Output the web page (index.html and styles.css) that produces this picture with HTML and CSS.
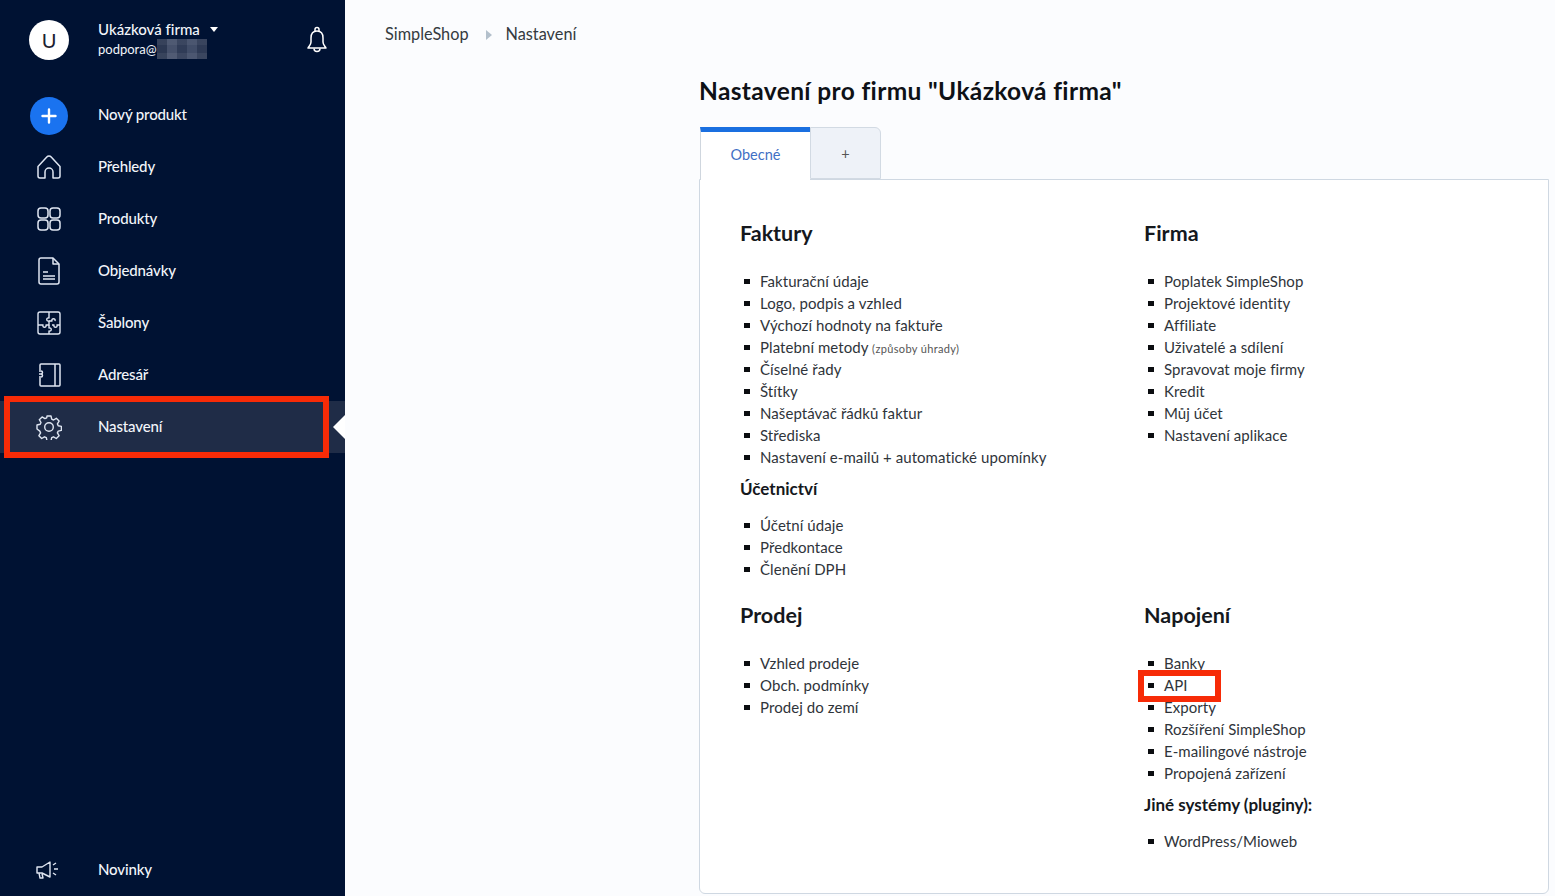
FILE: index.html
```html
<!DOCTYPE html>
<html lang="cs">
<head>
<meta charset="utf-8">
<title>Nastavení</title>
<link rel="stylesheet" href="styles.css">
</head>
<body>
<div class="app">
  <aside class="sidebar">
    <div class="account">
      <div class="avatar">U</div>
      <div class="account-info">
        <div class="account-name">Ukázková firma <span class="caret"></span></div>
        <div class="account-mail">podpora@<span class="blur"></span></div>
      </div>
      <svg class="bell" viewBox="0 0 24 28" width="24" height="28" fill="none" stroke="#fff" stroke-width="1.5" stroke-linejoin="round"><path d="M10 5V3.500a2 2 0 0 1 4 0V5"/><path d="M12 5c-4 0-6 3-6 7v4c0 3-2 4-3 6h18c-1-2-3-3-3-6v-4c0-4-2-7-6-7z"/><path d="M9 22.500c0 2 1.300 3 3 3s3-1 3-3"/></svg>
    </div>
    <nav class="nav">
      <a class="nav-item">
        <span class="nav-icon"><span class="plus-circle"><svg viewBox="0 0 16 16" width="16" height="16" fill="none" stroke="#fff" stroke-width="2.400" stroke-linecap="round"><path d="M8 1.500v13M1.500 8h13"/></svg></span></span>
        Nový produkt
      </a>
      <a class="nav-item">
        <span class="nav-icon"><svg viewBox="0 0 26 26" width="26" height="26" fill="none" stroke="#dfe6f2" stroke-width="1.500" stroke-linejoin="round"><path d="M2 12.500 10.800 3a3 3 0 0 1 4.400 0L24 12.500V22a2 2 0 0 1-2 2h-5v-6a4 4 0 0 0-8 0v6H4a2 2 0 0 1-2-2z"/></svg></span>
        Přehledy
      </a>
      <a class="nav-item">
        <span class="nav-icon"><svg viewBox="0 0 26 26" width="26" height="26" fill="none" stroke="#dfe6f2" stroke-width="1.500"><rect x="2" y="2" width="10" height="10" rx="3"/><rect x="14" y="2" width="10" height="10" rx="3"/><rect x="2" y="14" width="10" height="10" rx="3"/><rect x="14" y="14" width="10" height="10" rx="3"/></svg></span>
        Produkty
      </a>
      <a class="nav-item">
        <span class="nav-icon"><svg viewBox="0 0 26 30" width="26" height="30" fill="none" stroke="#dfe6f2" stroke-width="1.500" stroke-linejoin="round"><path d="M5 2h12l6 6v18a2 2 0 0 1-2 2H5a2 2 0 0 1-2-2V4a2 2 0 0 1 2-2z"/><path d="M17 2v6h6"/><path d="M7 16h5M7 20h12M7 23h12"/></svg></span>
        Objednávky
      </a>
      <a class="nav-item">
        <span class="nav-icon"><svg viewBox="0 0 26 26" width="26" height="26" fill="none" stroke="#dfe6f2" stroke-width="1.400" stroke-linejoin="round"><rect x="2" y="2" width="22" height="22" rx="2"/><path d="M13 2v6c-3-1-3 4 0 3v4h-3c1 3-4 3-3 0H2"/><path d="M13 15v3c3-1 3 4 0 3v3"/><path d="M13 11h3c-1-3 4-3 3 0v0"/><path d="M16 15h2c-1 3 4 3 3 0h3"/></svg></span>
        Šablony
      </a>
      <a class="nav-item">
        <span class="nav-icon"><svg viewBox="0 0 26 26" width="26" height="26" fill="none" stroke="#dfe6f2" stroke-width="1.500" stroke-linejoin="round"><path d="M4 8V3a1 1 0 0 1 1-1h18a1 1 0 0 1 1 1v20a1 1 0 0 1-1 1H5a1 1 0 0 1-1-1v-7"/><path d="M19 2v22"/><path d="M3 9h2a1.500 1.500 0 0 1 0 3H3M3 12h2a1.500 1.500 0 0 1 0 3H3"/></svg></span>
        Adresář
      </a>
      <a class="nav-item active">
        <span class="nav-icon"><svg viewBox="0 0 26 26" width="26" height="26" fill="none" stroke="#dfe6f2" stroke-width="1.400" stroke-linejoin="round"><circle cx="13" cy="13" r="4.300"/><path d="M11 2h4l.7 3.200 1.800.8 2.800-1.700 2.800 2.800-1.700 2.800.8 1.800 3.200.7v4l-3.200.7-.8 1.800 1.700 2.800-2.800 2.800-2.800-1.700-1.800.8-.7 3.200h-4l-.7-3.200-1.800-.8-2.800 1.700-2.800-2.800 1.700-2.800-.8-1.800L1 15v-4l3.200-.7.8-1.800-1.700-2.800 2.800-2.800 2.800 1.700 1.800-.8z"/></svg></span>
        Nastavení
        <span class="active-arrow"></span>
      </a>
    </nav>
    <a class="nav-item news">
      <span class="nav-icon"><svg viewBox="0 0 24 20" width="24" height="20" fill="none" stroke="#dfe6f2" stroke-width="1.400" stroke-linejoin="round"><path d="M1 7h5l8-5v15l-8-4H1z"/><path d="M3 13l1 5h3l-1-4.500"/><path d="M17 5l3-2M18 9h4M17 13l3 2"/></svg></span>
      Novinky
    </a>
    <span class="mark mark-nav"></span>
  </aside>
  <main class="main">
    <div class="crumbs">
      <span>SimpleShop</span>
      <span class="crumb-arrow"></span>
      <span>Nastavení</span>
    </div>
    <div class="content">
      <h1 class="title">Nastavení pro firmu "Ukázková firma"</h1>
      <div class="tabs">
        <div class="tab tab-active">Obecné</div>
        <div class="tab tab-add">+</div>
      </div>
      <div class="panel">
        <section class="group g-invoices">
          <h2>Faktury</h2>
          <ul>
            <li>Fakturační údaje</li>
            <li>Logo, podpis a vzhled</li>
            <li>Výchozí hodnoty na faktuře</li>
            <li>Platební metody <small>(způsoby úhrady)</small></li>
            <li>Číselné řady</li>
            <li>Štítky</li>
            <li>Našeptávač řádků faktur</li>
            <li>Střediska</li>
            <li>Nastavení e-mailů + automatické upomínky</li>
          </ul>
          <h3>Účetnictví</h3>
          <ul>
            <li>Účetní údaje</li>
            <li>Předkontace</li>
            <li>Členění DPH</li>
          </ul>
        </section>
        <section class="group">
          <h2>Firma</h2>
          <ul>
            <li>Poplatek SimpleShop</li>
            <li>Projektové identity</li>
            <li>Affiliate</li>
            <li>Uživatelé a sdílení</li>
            <li>Spravovat moje firmy</li>
            <li>Kredit</li>
            <li>Můj účet</li>
            <li>Nastavení aplikace</li>
          </ul>
        </section>
        <section class="group">
          <h2>Prodej</h2>
          <ul>
            <li>Vzhled prodeje</li>
            <li>Obch. podmínky</li>
            <li>Prodej do zemí</li>
          </ul>
        </section>
        <section class="group">
          <h2>Napojení</h2>
          <ul>
            <li>Banky</li>
            <li>API<span class="mark mark-api"></span></li>
            <li>Exporty</li>
            <li>Rozšíření SimpleShop</li>
            <li>E-mailingové nástroje</li>
            <li>Propojená zařízení</li>
          </ul>
          <h3>Jiné systémy (pluginy):</h3>
          <ul>
            <li>WordPress/Mioweb</li>
          </ul>
        </section>
      </div>
    </div>
  </main>
</div>
</body>
</html>
```
FILE: styles.css
```css
* { box-sizing: border-box; }
html, body { margin: 0; height: 100%; overflow: hidden; }
body { font-family: "Lato", "Open Sans", sans-serif; font-size: 15px; color: #2f343a; background: #fbfcfe; font-variant-ligatures: none; }
.app { display: flex; height: 896px; }

.sidebar { position: relative; flex: 0 0 345px; background: #001233; color: #f2f5fa; display: flex; flex-direction: column; }
.account { display: flex; align-items: center; height: 80px; padding: 0 16px 0 29px; }
.avatar { width: 40px; height: 40px; border-radius: 50%; background: #fff; color: #1b2130; font-size: 20px; display: flex; align-items: center; justify-content: center; margin-right: 29px; }
.account-info { flex: 1; line-height: 18px; margin-top: -2px; }
.account-name { font-size: 15px; font-weight: 500; }
.caret { display: inline-block; width: 0; height: 0; margin-left: 6px; border: 4.500px solid transparent; border-top: 5px solid #fff; border-bottom: 0; vertical-align: 3px; }
.account-mail { font-size: 13px; display: flex; align-items: center; height: 18px; margin-top: 2px; }
.blur { display: block; width: 50px; height: 20px; background:
  linear-gradient(180deg, rgba(255,255,255,.05) 0 30%, rgba(0,0,0,0) 30% 70%, rgba(255,255,255,.06) 70%),
  linear-gradient(90deg, #2c3852 0 20%, #46516b 20% 40%, #303c57 40% 60%, #414d68 60% 80%, #2e3a55 80%); }

.nav { margin-top: 9px; display: flex; flex-direction: column; flex: 1; }
.nav-item { position: relative; display: flex; align-items: center; height: 52px; padding-bottom: 2px; font-size: 15px; font-weight: 500; letter-spacing: -.15px; color: #f2f5fa; }
.nav-icon { flex: 0 0 98px; display: flex; justify-content: flex-start; margin-top: 2px; padding-left: 36px; }
.plus-circle { width: 38px; height: 38px; margin-left: -6px; margin-top: 1px; border-radius: 50%; background: #1a73f0; display: flex; align-items: center; justify-content: center; }
.active { background: #1f2c47; }
.active-arrow { position: absolute; right: 0; top: 14px; border: 12px solid transparent; border-right-color: #fff; border-left: 0; }

.mark { position: absolute; border: 6px solid #f72b07; pointer-events: none; }
.mark-nav { left: 4px; top: 396px; width: 325px; height: 62px; }
.mark-api { left: -26px; top: -4px; width: 83px; height: 32px; }

.main { flex: 1; min-width: 0; }
.crumbs { display: flex; align-items: center; gap: 15px; padding: 20px 0 0 40px; height: 48px; font-size: 16.300px; line-height: 20px; color: #343a40; }
.crumb-arrow { width: 0; height: 0; border: 5px solid transparent; border-left: 6px solid #b3c0cc; border-right: 0; margin: 2px -1px 0 2px; }
.content { margin-left: 354px; width: 850px; }
.title { margin: 26px 0 0; font-size: 24.500px; line-height: 34px; font-weight: 700; color: #0e1116; letter-spacing: .36px; }
.tabs { display: flex; margin: 19px 0 0 1px; height: 52px; position: relative; z-index: 1; }
.tab { display: flex; align-items: center; justify-content: center; font-size: 14.500px; }
.tab-active { width: 110px; height: 53px; background: #fff; color: #3f6fc4; border-top: 5px solid #1a6fe0; border-left: 1px solid #cfd6de; padding-bottom: 3px; }
.tab-add { width: 71px; background: #eef2f8; border: 1px solid #d2dae3; border-radius: 0 6px 0 0; color: #555; }
.panel { height: 715px; background: #fff; border: 1px solid #cfd8e2; border-radius: 0 0 6px 6px; padding: 37px 40px 0; display: grid; grid-template-columns: 404px 1fr; grid-template-rows: 382px 1fr; }
.group { position: relative; }
h2 { margin: 0 0 21px; font-size: 21.500px; line-height: 32px; font-weight: 700; color: #15181d; }
h3 { margin: 9px 0 13px; font-size: 17px; line-height: 24px; font-weight: 700; color: #15181d; }
ul { margin: 0; padding: 0 0 0 20px; list-style: none; }
li { position: relative; height: 22px; line-height: 22px; font-size: 15px; letter-spacing: .07px; color: #2f343a; }
li::before { content: ""; position: absolute; left: -16px; top: 9px; width: 6px; height: 5px; background: #0b0d10; }
small { font-size: 11px; letter-spacing: .35px; color: #555; }
```
